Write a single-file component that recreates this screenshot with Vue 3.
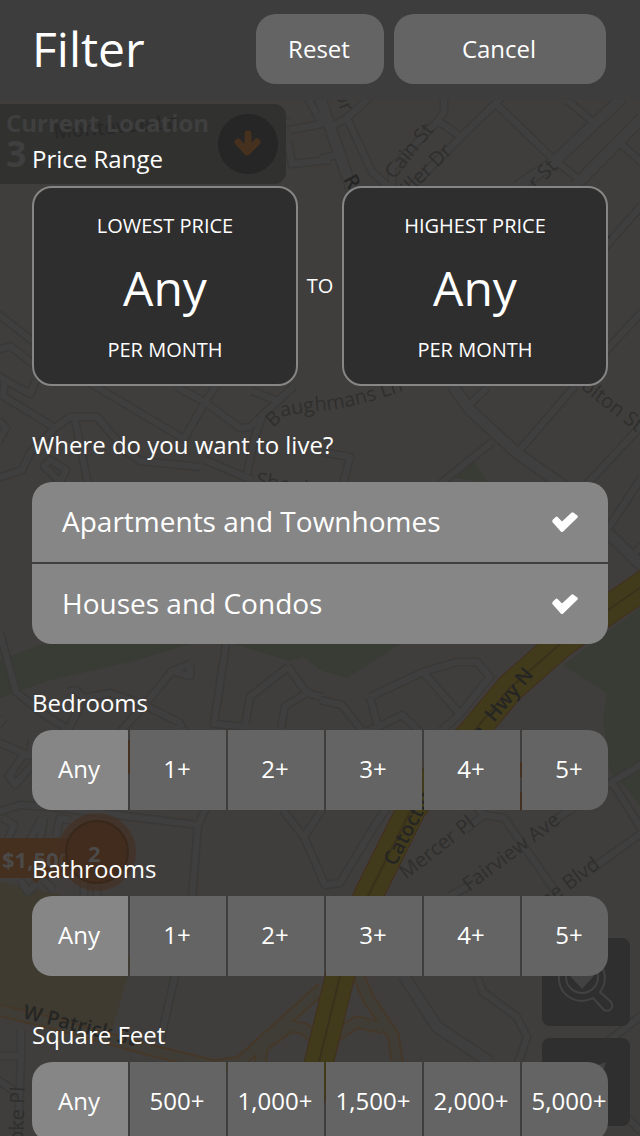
<script setup>
import { ref, reactive } from 'vue'

const homeTypes = reactive([
  { id: 'apartments', name: 'Apartments and Townhomes', on: true },
  { id: 'houses', name: 'Houses and Condos', on: true }
])

const counts = ['Any', '1+', '2+', '3+', '4+', '5+']
const groups = reactive([
  { id: 'bedrooms', name: 'Bedrooms', options: counts, value: 'Any' },
  { id: 'bathrooms', name: 'Bathrooms', options: counts, value: 'Any' },
  { id: 'area', name: 'Square Feet', options: ['Any', '500+', '1,000+', '1,500+', '2,000+', '5,000+'], value: 'Any' }
])

const prices = ref({ low: 'Any', high: 'Any' })

function reset() {
  prices.value = { low: 'Any', high: 'Any' }
  groups.forEach((g) => { g.value = 'Any' })
  homeTypes.forEach((t) => { t.on = true })
}

const mainRoads = [
  'M318 92 L352 190',
  'M642 118 L575 186',
  'M453 386 L470 410 L517 453 L565 487',
  'M608 533 L642 566',
  'M404 976 L437 1027 L490 1062',
  'M622 98 L553 163 L517 187'
]
const roads = [
  'M331 127 L347 118 L372 95 M347 118 L372 172 L390 188 M320 159 L337 155',
  'M444 95 V112 L437 122 L392 168 V188 M438 121 L460 136',
  'M505 94 L460 138 L410 188 M495 103 L552 158 L577 178',
  'M567 100 L593 122 M620 143 L642 163',
  'M308 98 L322 124 L290 130 M288 142 L292 164 L330 160',
  'M-2 146 L100 115 L200 116 L290 122 M140 170 L180 140 L240 128',
  'M642 205 L605 247 M642 312 L605 352',
  'M-2 314 L34 342 M-2 350 L10 346 L36 366 M-2 376 L5 380 L3 396 L55 428 L70 417 L97 417 L125 450 L140 461 L200 467',
  'M5 380 L30 394 L36 380 M55 428 L30 453 L22 470 L-2 478 M75 420 L88 484 M-2 420 L6 428 L-2 442',
  'M90 383 L184 439 L205 402 L216 386 M177 387 L205 402 L240 428 L250 427 L294 386',
  'M252 391 L280 402 M262 416 L254 440 L247 474 M205 460 L252 480',
  'M44 466 L50 460 L66 470 L60 482 Z M322 452 L350 457 L343 485',
  'M470 404 L487 388 M517 453 L575 386 M492 442 L440 484 M642 425 L587 484',
  'M642 477 L607 530 M632 556 L642 545',
  'M0 633 L16 692 L45 715 L66 728 M226 644 L214 724 L250 727',
  'M288 667 L250 697 L245 726 M288 667 L307 693 L285 706 L281 728 M307 693 L322 697',
  'M190 664 V676 L174 672 M190 664 L172 671 L143 707 L120 732 M143 704 L180 723 L184 732 L172 727',
  'M68 692 L76 690 L84 698 L68 730 M84 698 L110 693 L143 704',
  'M370 697 L423 672 L457 662 L477 662 L490 677 L460 714 M423 672 L460 714 L440 732 M370 697 L378 727 L402 715 L420 732',
  'M320 700 L342 705 L363 732 M378 727 L362 733',
  'M-2 742 L30 756 L32 740 M24 754 L9 776 L15 785 L32 765 M-2 725 L4 718',
  'M-2 812 L20 805 L60 808 L198 825 L206 808 M198 825 L192 898',
  'M3 818 L14 825 L8 840 M42 818 L30 840 L40 842 L44 818 M70 820 L60 818 L56 836',
  'M20 880 L28 892 L36 884 M43 880 L54 890 M84 880 V896 M97 882 V896',
  'M283 810 L304 837 L323 808 M304 837 L325 885 L340 883 L375 825 L387 808',
  'M475 805 L484 815 L504 818 L556 892 M484 815 L465 830 M450 896 L470 885',
  'M555 820 L612 782 L642 764 M612 782 L642 830 M642 833 L590 870',
  'M477 976 L483 992 L517 1017 L527 1037 L518 1064',
  'M642 1015 L610 1040 L575 1070 M608 1100 L642 1132',
  'M175 976 L160 1042 M21 1030 V1060 L18 1136 M-2 1056 H20 M-2 1080 L20 1095'
]
const tanRoads = [
  'M-2 1010 L60 1025 L150 1050 L215 1066 L240 1062 L322 988',
  'M260 1066 L262 1047 L290 1026 L305 1029 L318 1042',
  'M357 972 L368 998 L393 1035 L398 1066 M337 1035 L357 1022 L383 1028'
]
const highway = 'M650 581 L608 610 L560 644 L510 688 L475 730 L440 770 L411 810 L368 896 L340 976 L319 1062 L300 1140'
</script>

<template>
  <div class="screen">
    <svg class="map" viewBox="0 0 640 1136" preserveAspectRatio="xMidYMin slice" aria-hidden="true">
      <g class="green">
        <path d="M0 660 L43 644 H190 L130 662 L50 680 L0 698 Z" />
        <path d="M233 644 L290 661 L303 657 L322 671 L347 678 L400 644 Z" />
        <path d="M455 478 L475 462 L487 482 Z" />
        <path d="M563 665 L610 630 L640 608 V806 L626 787 L610 773 L603 720 L607 693 Z" />
      </g>
      <path class="sand" d="M0 882 L60 895 L132 960 L112 1030 L0 1004 Z" />

      <g class="road-edge">
        <path v-for="d in roads" :key="d" :d="d" />
        <path v-for="d in mainRoads" :key="d" class="wide" :d="d" />
      </g>
      <g class="road-fill">
        <path v-for="d in roads" :key="d" :d="d" />
        <path v-for="d in mainRoads" :key="d" class="wide" :d="d" />
      </g>
      <g class="tan-edge"><path v-for="d in tanRoads" :key="d" :d="d" /></g>
      <g class="tan-fill"><path v-for="d in tanRoads" :key="d" :d="d" /></g>
      <path class="hwy-edge" :d="highway" />
      <path class="hwy-fill" :d="highway" />
      <path class="hwy-mid" :d="highway" />

      <path id="baughmans" class="guide" d="M273 428 L286 416 Q300 413 320 411 Q350 409 400 392" />
      <g class="names">
        <text transform="translate(394 180) rotate(-51)">Cain St</text>
        <text transform="translate(409 196) rotate(-45)">iller Dr</text>
        <text transform="translate(536 190) rotate(-45)">r St</text>
        <text transform="translate(333 92) rotate(68)">Dr</text>
        <text><textPath href="#baughmans">Baughmans Ln</textPath></text>
        <text transform="translate(580 388) rotate(38)">olton St</text>
        <text transform="translate(255 486) rotate(10)">Shookstown</text>
        <text transform="translate(608 240) rotate(-45)">l</text>
        <text transform="translate(406 880) rotate(-38)">Mercer Pl</text>
        <text transform="translate(469 892) rotate(-37)">Fairview Ave</text>
        <text transform="translate(546 908) rotate(-37)">ne Blvd</text>
        <text transform="translate(23 1143) rotate(-88)">oke Pl</text>
      </g>
      <g class="names strong">
        <text transform="translate(343 179) rotate(62)">R</text>
        <text transform="translate(22 1018) rotate(14)">W Patrick St</text>
        <text transform="translate(395 867) rotate(-62)">Catoctin</text>
        <text transform="translate(494 723) rotate(-50)">Hwy N</text>
        <text transform="translate(480 742) rotate(-52)">n</text>
      </g>

      <path class="tag" d="M0 838 H70 V878 H41 L36 883 L31 878 H0 Z" />
      <path class="tag" d="M128 740 h4 v34 h-4z M520 762 h3 v15 h-3z M520 792 h3 v18 h-3z" />
      <text class="tag-text" x="2" y="868">$1,500</text>
      <circle class="halo" cx="97" cy="852" r="39" />
      <circle class="pin" cx="97" cy="852" r="31" />
      <text class="tag-text" x="88" y="862">2</text>

      <path class="panel" d="M0 104 H274 a12 12 0 0 1 12 12 V172 a12 12 0 0 1 -12 12 H0 Z" />
      <g class="ghost">
        <text class="under" transform="translate(54 139) rotate(-5)">Montevue Ln</text>
        <text x="6" y="132" class="place">Current Location</text>
        <text x="6" y="167" class="number">3</text>
        <text x="34" y="164" class="away">hours away</text>
      </g>
      <circle class="disc" cx="248" cy="144" r="30" />
      <path class="arrow" d="M248 134 V151 M238 142 L247 152 L257 142" />

      <g class="tool">
        <rect x="542" y="938" width="88" height="88" rx="8" />
        <rect x="542" y="1038" width="88" height="88" rx="8" />
        <path d="M600 992 L611 1002 A5 5 0 0 1 603 1009 L593 998 A23 23 0 1 1 600 992 Z" />
        <circle cx="582" cy="977" r="16" />
        <path class="solid" d="M582 989 L571 977 A6 6 0 0 1 582 970 A6 6 0 0 1 593 977 Z" />
        <path class="solid" d="M596 1066 L606 1062 L603 1072 Z" />
      </g>
    </svg>

    <header class="bar">
      <h1>Filter</h1>
      <div class="actions">
        <button type="button" class="action reset" @click="reset">Reset</button>
        <button type="button" class="action cancel">Cancel</button>
      </div>
    </header>

    <main class="filters">
      <section>
        <h2>Price Range</h2>
        <div class="range">
          <button type="button" class="price">
            <span>LOWEST PRICE</span>
            <strong>{{ prices.low }}</strong>
            <span>PER MONTH</span>
          </button>
          <span class="to">TO</span>
          <button type="button" class="price">
            <span>HIGHEST PRICE</span>
            <strong>{{ prices.high }}</strong>
            <span>PER MONTH</span>
          </button>
        </div>
      </section>

      <section class="where">
        <h2>Where do you want to live?</h2>
        <div class="types">
          <label v-for="t in homeTypes" :key="t.id" class="type" :for="t.id">
            <span>{{ t.name }}</span>
            <input :id="t.id" v-model="t.on" type="checkbox" />
            <svg viewBox="0 0 26 20" aria-hidden="true">
              <path d="M1 7.6 L3.6 5 Q4.6 4.2 5.6 5 L10 9.4 L19.4 0.7 Q20.5 -0.2 21.6 0.7 L25.3 3.6 Q26.4 4.7 25.3 5.8 L11.2 19.4 Q10 20.4 8.8 19.4 L0.8 10.6 Q-0.4 9 1 7.6 Z" />
            </svg>
          </label>
        </div>
      </section>

      <section v-for="g in groups" :key="g.id">
        <h2 :id="g.id">{{ g.name }}</h2>
        <div class="segments" role="radiogroup" :aria-labelledby="g.id">
          <label v-for="o in g.options" :key="o" class="segment" :class="{ chosen: g.value === o }">
            <input v-model="g.value" type="radio" :name="g.id" :value="o" />
            <span>{{ o }}</span>
          </label>
        </div>
      </section>
    </main>
  </div>
</template>

<style>
body {
  background: #403e3c;
}
</style>

<style scoped>
.screen {
  position: relative;
  display: flex;
  flex-direction: column;
  height: 100vh;
  overflow: hidden;
  background: #403e3c;
  color: #fff;
  font-family: "Open Sans", "Noto Sans", sans-serif;
}
.map {
  position: absolute;
  inset: 0;
  width: 100%;
  height: 100%;
}
.map path {
  stroke-linejoin: round;
}
.guide { fill: none; }
.green { fill: #383c35; }
.sand { fill: #3f3b31; }
.road-edge, .road-fill, .tan-edge, .tan-fill, .hwy-edge, .hwy-fill, .hwy-mid { fill: none; }
.road-edge { stroke: #3a3937; stroke-width: 9; }
.road-edge .wide { stroke-width: 13; }
.road-fill { stroke: #3f3f3f; stroke-width: 6; }
.road-fill .wide { stroke-width: 10; }
.tan-edge { stroke: #453829; stroke-width: 13; }
.tan-fill { stroke: #403d37; stroke-width: 9; }
.hwy-edge { stroke: #432f20; stroke-width: 30; }
.hwy-fill { stroke: #413b1c; stroke-width: 28; }
.hwy-mid { stroke: #3a311c; stroke-width: 2; }
.names {
  fill: #2f2f2e;
  font-size: 20px;
}
.strong {
  font-weight: 600;
  fill: #252524;
}
.tag { fill: #452f1f; }
.tag-text {
  fill: #4c4a48;
  font-size: 22px;
  font-weight: 700;
}
.halo { fill: #452f20; fill-opacity: 0.6; }
.pin { fill: #412c1e; stroke: #38271b; stroke-width: 2; }
.panel { fill: #313130; }
.ghost { fill: #3f3f3f; }
.under { fill: #292929; font-size: 20px; font-weight: 600; }
.place { font-size: 24px; font-weight: 700; }
.number { font-size: 36px; font-weight: 700; }
.away { font-size: 20px; fill: #383838; }
.disc { fill: #262626; }
.arrow {
  fill: none;
  stroke: #46311f;
  stroke-width: 7;
  stroke-linecap: round;
}
.tool rect { fill: #2f2f2f; stroke: none; }
.tool { fill: none; stroke: #424242; stroke-width: 2; }
.tool .solid { fill: #424242; stroke: none; }

.bar {
  position: relative;
  display: flex;
  align-items: center;
  justify-content: space-between;
  flex: none;
  box-sizing: border-box;
  height: 100px;
  padding: 0 34px 2px 32px;
  background: #3d3d3d;
}
h1 {
  margin: 0;
  font-size: 48px;
  line-height: 64px;
  font-weight: 400;
}
.actions {
  display: flex;
  gap: 10px;
}
button {
  margin: 0;
  padding: 0;
  border: 0;
  color: inherit;
  font: inherit;
  cursor: pointer;
}
.action {
  height: 70px;
  padding: 0 2px 2px 0;
  border-radius: 20px;
  background: #646464;
  font-size: 24px;
}
.reset { width: 128px; }
.cancel { width: 212px; }

.filters {
  position: relative;
  display: flex;
  flex: 1;
  flex-direction: column;
  gap: 43px;
  min-height: 0;
  padding: 43px 32px;
  overflow-y: auto;
  scrollbar-width: none;
}
section { flex: none; }
h2 {
  margin: 0 0 11px;
  font-size: 24px;
  line-height: 32px;
  font-weight: 400;
}
.where h2 { margin-bottom: 21px; }

.range {
  display: grid;
  grid-template-columns: 1fr 44px 1fr;
  align-items: center;
}
.price {
  display: flex;
  flex-direction: column;
  justify-content: center;
  box-sizing: border-box;
  height: 200px;
  padding-top: 4px;
  border: 2px solid #868686;
  border-radius: 20px;
  background: #2e2e2e;
  font-size: 20px;
  line-height: 62px;
  text-align: center;
}
.price strong {
  font-size: 48px;
  font-weight: 400;
}
.to {
  padding-bottom: 2px;
  font-size: 20px;
  text-align: center;
}

.types {
  display: flex;
  flex-direction: column;
  gap: 2px;
  overflow: hidden;
  border-radius: 20px;
  background: #403f3f;
}
.type {
  position: relative;
  display: flex;
  align-items: center;
  justify-content: space-between;
  height: 80px;
  padding: 0 30px;
  background: #868686;
  font-size: 28px;
  cursor: pointer;
}
.type span { padding-bottom: 2px; }
.type svg {
  width: 26px;
  height: 20px;
  fill: #fff;
  visibility: hidden;
}
.type input:checked + svg { visibility: visible; }
input {
  position: absolute;
  inset: 0;
  width: 100%;
  height: 100%;
  margin: 0;
  opacity: 0;
  cursor: pointer;
}

.segments {
  display: flex;
  gap: 2px;
  overflow: hidden;
  border-radius: 20px;
}
.segment {
  position: relative;
  display: flex;
  flex: 0 0 calc(100% / 6);
  align-items: center;
  justify-content: center;
  box-sizing: border-box;
  height: 80px;
  padding: 0 2px 4px 0;
  background: #646464;
  font-size: 24px;
}
.chosen { background: #868686; }
</style>
